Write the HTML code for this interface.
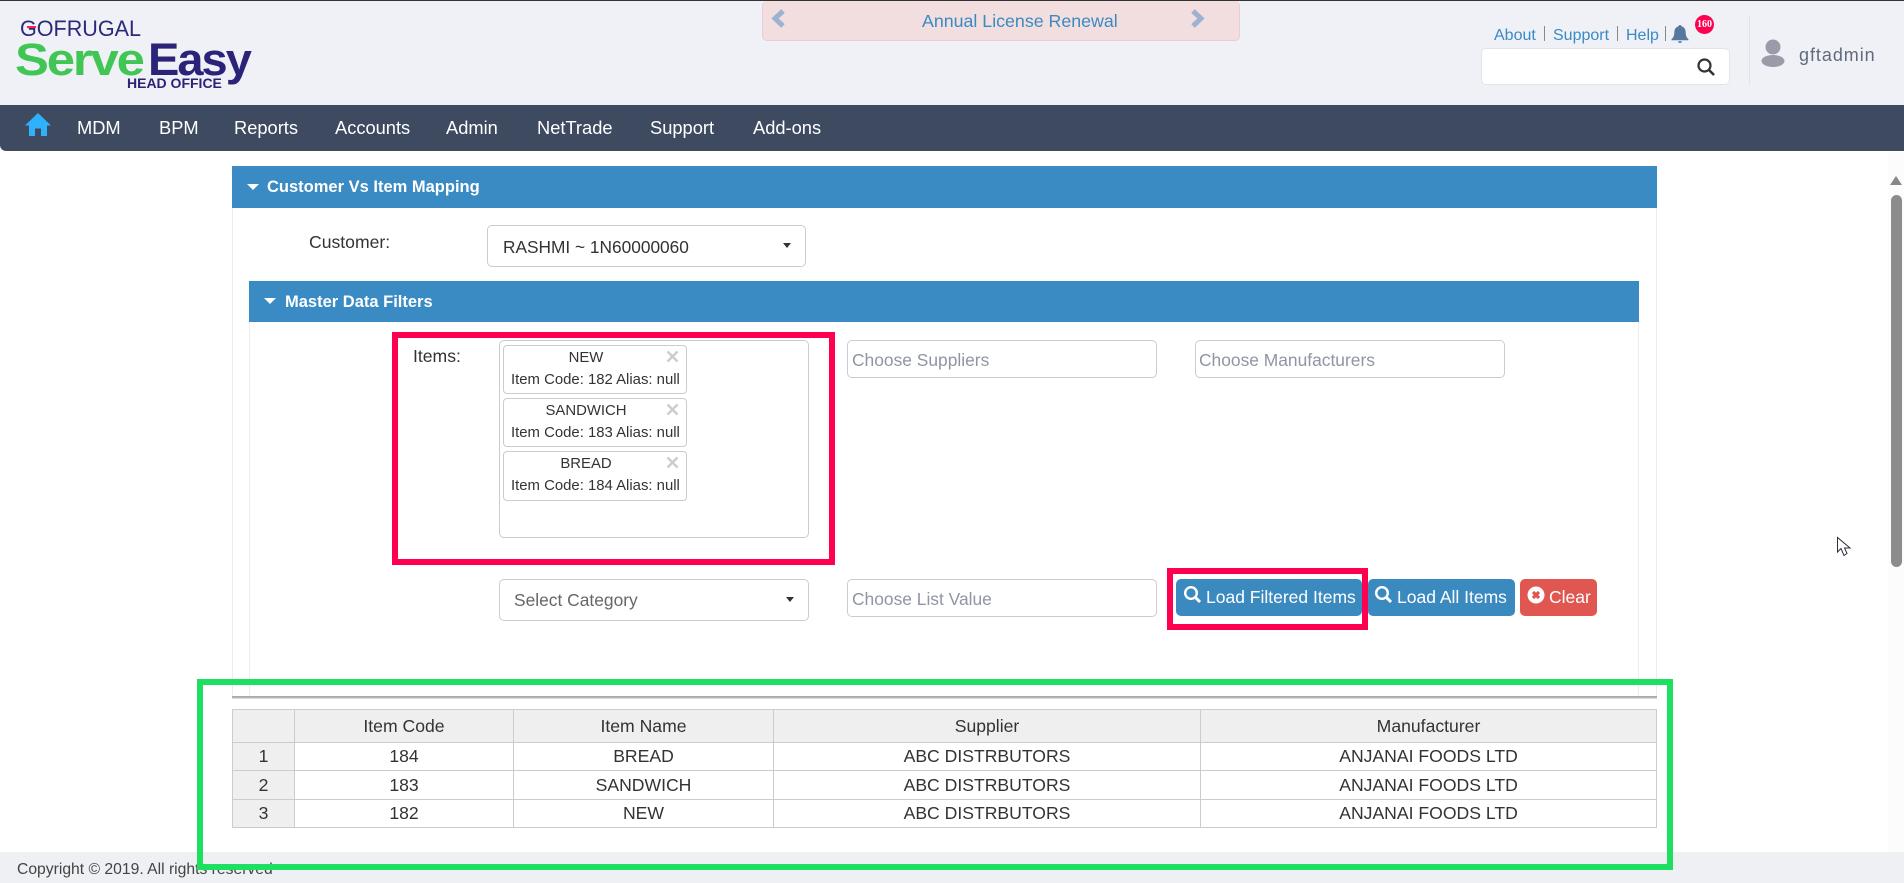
<!DOCTYPE html>
<html><head><meta charset="utf-8"><title>Customer Vs Item Mapping</title>
<style>
html,body{margin:0;padding:0;width:1904px;height:883px;overflow:hidden;background:#fff}
body{font-family:"Liberation Sans",sans-serif;color:#333;position:relative}
.a{position:absolute;white-space:nowrap}
.box{position:absolute;box-sizing:border-box;background:#fff;border:1px solid #ccc;border-radius:5px}
.ph{color:#8f95a3;font-size:17.4px}
.head{position:absolute;background:#3a8ac4;color:#fff;font-weight:bold;font-size:16.5px}
.tri{position:absolute;width:0;height:0;border-left:6px solid transparent;border-right:6px solid transparent;border-top:6px solid #fff}
.caret{position:absolute;width:0;height:0;border-left:4.5px solid transparent;border-right:4.5px solid transparent;border-top:5px solid #333}
.chip{position:absolute;left:503px;width:184px;box-sizing:border-box;border:1px solid #ccc;border-radius:4px;background:#fff;font-size:14.9px;height:49px}
.chip .t{position:absolute;left:0;width:164px;top:4px;text-align:center}
.chip .c{position:absolute;left:7px;top:26px;white-space:nowrap}
.chip .x{position:absolute;right:7px;top:4px;width:13px;height:13px}
.btn{position:absolute;box-sizing:border-box;height:37px;top:579px;border-radius:5px;background:#3a8ac0;color:#fff;font-size:17.5px;line-height:36px;white-space:nowrap}
.btn svg{position:absolute;top:6px}
.btn span{position:absolute;top:0}
.nav{position:absolute;top:117px;color:#fff;font-family:"Liberation Sans",sans-serif;font-size:18.3px;white-space:nowrap}
table{position:absolute;left:232px;top:709px;width:1425px;border-collapse:collapse;table-layout:fixed;font-size:17.6px;color:#333}
td,th{border:1px solid #ccc;text-align:center;font-weight:normal;padding:0;box-sizing:border-box}
th{background:#efefef;height:33px;padding-top:1px}
td{height:28px}
td:first-child{background:#efefef}
.rb{position:absolute;box-sizing:border-box;border:6px solid #ff0050}
.link{position:absolute;top:27px;color:#3a8ac4;font-size:16px;white-space:nowrap}
.sep{position:absolute;top:26px;width:1px;height:15px;background:#888}
</style></head><body>

<!-- header -->
<div class="a" style="left:0;top:0;width:1904px;height:105px;background:#f0f1f7;border-top:1px solid #333;box-sizing:border-box"></div>
<div class="a" style="left:20px;top:18px;font-size:22px;color:#2b2a78;transform-origin:0 0;transform:scaleX(.98);line-height:22px">GOFRUGAL</div>
<div class="a" style="left:27px;top:26px;width:9px;height:2px;background:#ff2050"></div>
<div class="a" style="left:15px;top:32px;font-size:45px;font-weight:bold;color:#41c655;letter-spacing:-1.900px;line-height:56px;transform-origin:0 0;transform:scaleX(1.13)">Serve</div>
<div class="a" style="left:148px;top:32px;font-size:45px;font-weight:bold;color:#2b2378;letter-spacing:-1.900px;line-height:56px;transform-origin:0 0;transform:scaleX(1.045)">Easy</div>
<div class="a" style="left:127px;top:77px;font-size:14px;font-weight:bold;color:#2b2378;line-height:13px">HEAD OFFICE</div>

<!-- banner -->
<div class="a" style="left:762px;top:1px;width:478px;height:40px;box-sizing:border-box;background:#f2dede;border:1px solid #ebccd1;border-top:0;border-radius:5px"></div>
<svg class="a" style="left:771px;top:9px" width="16" height="19" viewBox="0 0 16 19"><path d="M12 2 L4 9.500 L12 17" fill="none" stroke="#9db2d1" stroke-width="5"/></svg>
<svg class="a" style="left:1189px;top:9px" width="16" height="19" viewBox="0 0 16 19"><path d="M4 2 L12 9.500 L4 17" fill="none" stroke="#9db2d1" stroke-width="5"/></svg>
<div class="a" style="left:922px;top:11px;font-size:17.8px;color:#3a8ac4;line-height:20px">Annual License Renewal</div>

<!-- top right -->
<div class="link" style="left:1494px">About</div><div class="sep" style="left:1544px"></div>
<div class="link" style="left:1553px">Support</div><div class="sep" style="left:1617px"></div>
<div class="link" style="left:1626px">Help</div><div class="sep" style="left:1665px"></div>
<svg class="a" style="left:1671px;top:24px" width="18" height="20" viewBox="0 0 18 20"><path d="M9 1c1 0 1.400.6 1.400 1.300C13.300 3 14.700 5.500 14.700 8.500c0 3.500 1 5 2.800 6.800v1H.5v-1c1.800-1.800 2.800-3.300 2.800-6.800C3.300 5.500 4.700 3 7.600 2.300 7.600 1.600 8 1 9 1zM7 17.300h4c0 1-.9 1.700-2 1.700s-2-.7-2-1.700z" fill="#56789f"/></svg>
<div class="a" style="left:1695px;top:15px;width:19px;height:19px;border-radius:50%;background:#ff0050;color:#fff;font-size:10px;font-weight:bold;line-height:19px;text-align:center;overflow:hidden;font-family:'Liberation Serif',serif">160</div>
<div class="a" style="left:1481px;top:48px;width:249px;height:37px;box-sizing:border-box;background:#fff;border:1px solid #e3e4ea;border-radius:5px"></div>
<svg class="a" style="left:1696px;top:57px" width="20" height="20" viewBox="0 0 20 20"><circle cx="8.500" cy="8.500" r="6" fill="none" stroke="#333" stroke-width="2.200"/><path d="M13 13 L18 18" stroke="#333" stroke-width="2.600"/></svg>
<div class="a" style="left:1749px;top:15px;width:1px;height:70px;background:#e2e3ea"></div>
<svg class="a" style="left:1760px;top:38px" width="26" height="30" viewBox="0 0 26 30"><circle cx="13" cy="9" r="7.500" fill="#9a9aa8"/><ellipse cx="13" cy="23" rx="11.500" ry="6" fill="#9a9aa8"/></svg>
<div class="a" style="left:1799px;top:44px;font-size:18px;color:#5f6b7c;line-height:22px;letter-spacing:.95px">gftadmin</div>

<!-- nav -->
<div class="a" style="left:0;top:105px;width:1904px;height:46px;background:#3d4a60;border-radius:0 0 0 6px"></div>
<svg class="a" style="left:25px;top:113px" width="26" height="24" viewBox="0 0 26 24"><path d="M13 0 L26 12.500 H22 V23 H16 V15.500 H10 V23 H4 V12.500 H0 Z" fill="#2eb2fb"/></svg>
<div class="nav" style="left:77px">MDM</div>
<div class="nav" style="left:159px">BPM</div>
<div class="nav" style="left:234px">Reports</div>
<div class="nav" style="left:335px">Accounts</div>
<div class="nav" style="left:446px">Admin</div>
<div class="nav" style="left:537px">NetTrade</div>
<div class="nav" style="left:650px">Support</div>
<div class="nav" style="left:753px">Add-ons</div>

<!-- main panel -->
<div class="a" style="left:232px;top:208px;width:1425px;height:489px;box-sizing:border-box;background:#fff;border-left:1px solid #ececec;border-right:1px solid #ececec"></div>
<div class="a" style="left:232px;top:696px;width:1425px;height:3px;background:linear-gradient(#aaa,#aaa 40%,#ececec)"></div>
<div class="head" style="left:232px;top:166px;width:1425px;height:42px;line-height:43px;text-indent:35px">Customer Vs Item Mapping</div>
<div class="tri" style="left:247px;top:184px"></div>
<div class="a" style="left:309px;top:232px;font-size:17.6px;line-height:20px">Customer:</div>
<div class="box" style="left:487px;top:225px;width:319px;height:42px"></div>
<div class="a" style="left:503px;top:237px;font-size:17.3px;line-height:20px">RASHMI ~ 1N60000060</div>
<div class="caret" style="left:783px;top:243px"></div>

<!-- inner panel -->
<div class="a" style="left:249px;top:322px;width:1390px;height:374px;box-sizing:border-box;background:#fff;border-left:1px solid #ececec;border-right:1px solid #ececec"></div>
<div class="head" style="left:249px;top:281px;width:1390px;height:41px;line-height:42px;text-indent:36px">Master Data Filters</div>
<div class="tri" style="left:264px;top:298px"></div>

<div class="a" style="left:413px;top:346px;font-size:17.6px;line-height:20px">Items:</div>
<div class="box" style="left:499px;top:340px;width:310px;height:198px"></div>
<div class="chip" style="top:345px"><div class="t">NEW</div><div class="c">Item Code: 182 Alias: null</div><svg class="x" viewBox="0 0 13 13"><path d="M1.500 1.500 L11.500 11.500 M11.500 1.500 L1.500 11.500" stroke="#ccc" stroke-width="2.400"/></svg></div>
<div class="chip" style="top:398px"><div class="t">SANDWICH</div><div class="c">Item Code: 183 Alias: null</div><svg class="x" viewBox="0 0 13 13"><path d="M1.500 1.500 L11.500 11.500 M11.500 1.500 L1.500 11.500" stroke="#ccc" stroke-width="2.400"/></svg></div>
<div class="chip" style="top:451px;height:50px"><div class="t">BREAD</div><div class="c">Item Code: 184 Alias: null</div><svg class="x" viewBox="0 0 13 13"><path d="M1.500 1.500 L11.500 11.500 M11.500 1.500 L1.500 11.500" stroke="#ccc" stroke-width="2.400"/></svg></div>

<div class="box" style="left:847px;top:340px;width:310px;height:38px"></div>
<div class="a ph" style="left:852px;top:350px;line-height:20px">Choose Suppliers</div>
<div class="box" style="left:1195px;top:340px;width:310px;height:38px"></div>
<div class="a ph" style="left:1199px;top:350px;line-height:20px">Choose Manufacturers</div>

<div class="box" style="left:499px;top:579px;width:310px;height:42px"></div>
<div class="a" style="left:514px;top:590px;font-size:17.4px;line-height:21px;color:#666">Select Category</div>
<div class="caret" style="left:786px;top:597px"></div>
<div class="box" style="left:847px;top:579px;width:310px;height:38px"></div>
<div class="a ph" style="left:852px;top:589px;line-height:21px">Choose List Value</div>

<div class="btn" style="left:1176px;width:186px"><svg style="left:7px" width="20" height="20" viewBox="0 0 20 20"><circle cx="8" cy="8" r="5.800" fill="none" stroke="#fff" stroke-width="2.400"/><path d="M12.500 12.500 L17 17" stroke="#fff" stroke-width="3"/></svg><span style="left:30px">Load Filtered Items</span></div>
<div class="btn" style="left:1368px;width:147px"><svg style="left:6px" width="20" height="20" viewBox="0 0 20 20"><circle cx="8" cy="8" r="5.800" fill="none" stroke="#fff" stroke-width="2.400"/><path d="M12.500 12.500 L17 17" stroke="#fff" stroke-width="3"/></svg><span style="left:29px">Load All Items</span></div>
<div class="btn" style="left:1520px;width:77px;background:#e05650"><svg style="left:7px;top:7px" width="18" height="18" viewBox="0 0 18 18"><circle cx="9" cy="9" r="8.500" fill="#fff"/><path d="M6 6 L12 12 M12 6 L6 12" stroke="#e05650" stroke-width="3.200"/></svg><span style="left:29px">Clear</span></div>

<!-- table -->
<table style="width:1424px">
<colgroup><col style="width:62px"><col style="width:219px"><col style="width:260px"><col style="width:427px"><col style="width:456px"></colgroup>
<tr><th></th><th>Item Code</th><th>Item Name</th><th>Supplier</th><th>Manufacturer</th></tr>
<tr><td>1</td><td>184</td><td>BREAD</td><td>ABC DISTRBUTORS</td><td>ANJANAI FOODS LTD</td></tr>
<tr><td style="height:29px">2</td><td>183</td><td>SANDWICH</td><td>ABC DISTRBUTORS</td><td>ANJANAI FOODS LTD</td></tr>
<tr><td>3</td><td>182</td><td>NEW</td><td>ABC DISTRBUTORS</td><td>ANJANAI FOODS LTD</td></tr>
</table>

<!-- footer -->
<div class="a" style="left:0;top:852px;width:1904px;height:31px;background:#eef0f4"></div>
<div class="a" style="left:17px;top:860px;font-size:15.7px;line-height:19px;color:#444">Copyright © 2019. All rights reserved</div>

<!-- annotation boxes -->
<div class="rb" style="left:392px;top:332px;width:443px;height:233px"></div>
<div class="rb" style="left:1167px;top:568px;width:201px;height:62px"></div>
<div class="a" style="left:197px;top:679px;width:1476px;height:191px;box-sizing:border-box;border:6px solid #1ee060"></div>

<!-- scrollbar -->
<div class="a" style="left:1888px;top:152px;width:16px;height:700px;background:#fcfcfc"></div>
<div class="a" style="left:1890px;top:176px;width:0;height:0;border-left:6.500px solid transparent;border-right:6.500px solid transparent;border-bottom:9px solid #888"></div>
<div class="a" style="left:1891px;top:195px;width:11px;height:372px;background:#8c8c8c;border-radius:6px"></div>
<svg class="a" style="left:1836px;top:536px" width="16" height="24" viewBox="0 0 16 24"><path d="M1.500 1.500 V16 L5 12.500 L8 19.500 L11 17.500 L8.500 12 H14 Z" fill="#fff" stroke="#2a3040" stroke-width="1"/></svg>
</body></html>
